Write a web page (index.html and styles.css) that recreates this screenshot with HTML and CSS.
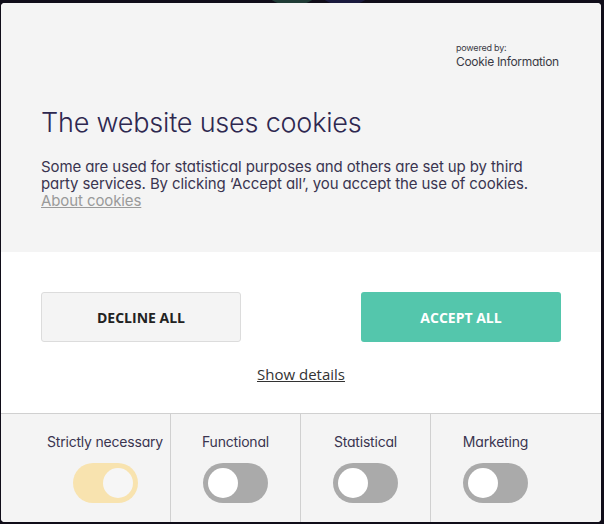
FILE: index.html
```html
<!DOCTYPE html>
<html lang="en">
<head>
    <meta charset="UTF-8">
    <meta name="viewport" content="width=device-width, initial-scale=1.0">
    <title>Cookie consent</title>
    <link rel="stylesheet" href="styles.css">
</head>
<body>
    <div class="backdrop">
        <span class="blob blob-green"></span>
        <span class="blob blob-blue"></span>
    </div>

    <div class="banner">
        <div class="banner-top">
            <div class="powered">
                <span class="powered-small">powered by:</span>
                <span class="powered-name">Cookie Information</span>
            </div>
            <h1 class="title">The website uses cookies</h1>
            <p class="intro">
                Some are used for statistical purposes and others are set up by third
                party services. By clicking ‘Accept all’, you accept the use of cookies.
                <br><a href="#" class="about">About cookies</a>
            </p>
        </div>

        <div class="banner-actions">
            <div class="buttons">
                <button class="btn btn-decline">Decline all</button>
                <button class="btn btn-accept">Accept all</button>
            </div>
            <a href="#" class="details">Show details</a>
        </div>

        <div class="categories">
            <div class="category">
                <span class="category-name">Strictly necessary</span>
                <span class="switch switch-locked"><span class="knob"></span></span>
            </div>
            <div class="category">
                <span class="category-name">Functional</span>
                <span class="switch"><span class="knob"></span></span>
            </div>
            <div class="category">
                <span class="category-name">Statistical</span>
                <span class="switch"><span class="knob"></span></span>
            </div>
            <div class="category">
                <span class="category-name">Marketing</span>
                <span class="switch"><span class="knob"></span></span>
            </div>
        </div>
    </div>
</body>
</html>
```

FILE: styles.css
```css
body {
    margin: 0;
    padding: 3px 0 0 1px;
    background-color: #100d19;
    font-family: Inter, "Liberation Sans", sans-serif;
    font-feature-settings: "cv11";
    position: relative;
    height: 524px;
    box-sizing: border-box;
    overflow: hidden;
}

.backdrop {
    position: absolute;
    top: 0;
    left: 0;
    right: 0;
    height: 10px;
}

.blob {
    position: absolute;
    top: -40px;
    width: 60px;
    height: 46px;
    border-radius: 50%;
}

.blob-green {
    left: 262px;
    background-color: #1f3b35;
}

.blob-blue {
    left: 315px;
    background-color: #1a1a3d;
}

.banner {
    position: relative;
    width: 600px;
    height: 519px;
    background-color: #fff;
    border-radius: 4px;
    overflow: hidden;
    display: flex;
    flex-direction: column;
}

.banner-top {
    background-color: #f4f4f4;
    height: 249px;
    padding: 40px 40px 0;
    box-sizing: border-box;
}

.powered {
    display: flex;
    flex-direction: column;
    width: 105px;
    margin-left: auto;
    color: #3a3a44;
    line-height: 1;
}

.powered-small {
    font-size: 9px;
    letter-spacing: -0.2px;
}

.powered-name {
    font-size: 12px;
    margin-top: 4px;
    letter-spacing: -0.3px;
}

.title {
    margin: 39px 0 0;
    font-size: 27px;
    font-weight: 300;
    color: #2e2850;
    letter-spacing: -0.2px;
    line-height: 1.2;
}

.intro {
    margin: 19px 0 0;
    font-size: 15px;
    line-height: 17px;
    color: #3a3550;
    letter-spacing: -0.1px;
}

.about {
    color: #9a9a9a;
}

.banner-actions {
    height: 162px;
    padding: 40px 40px 0;
    box-sizing: border-box;
    display: flex;
    flex-direction: column;
    align-items: center;
    border-bottom: 1px solid #d0d0d0;
}

.buttons {
    display: flex;
    justify-content: space-between;
    width: 100%;
}

.btn {
    width: 200px;
    height: 50px;
    border-radius: 3px;
    font-family: "Open Sans", sans-serif;
    font-weight: 700;
    font-size: 14px;
    text-transform: uppercase;
    cursor: pointer;
}

.btn-decline {
    background-color: #f4f4f4;
    border: 1px solid #dcdcdc;
    color: #222;
}

.btn-accept {
    background-color: #54c6ac;
    border: none;
    color: #fff;
}

.details {
    margin-top: 22px;
    font-family: "Open Sans", sans-serif;
    font-size: 15px;
    color: #333;
}

.categories {
    flex: 1;
    background-color: #f4f4f4;
    padding: 0 40px 0 39px;
    display: flex;
}

.category {
    width: 130px;
    display: flex;
    flex-direction: column;
    align-items: center;
    padding-top: 19px;
    box-sizing: border-box;
    border-left: 1px solid #d0d0d0;
}

.category:first-child {
    border-left: none;
}

.category-name {
    font-size: 14px;
    color: #3a3550;
    letter-spacing: -0.2px;
    white-space: nowrap;
}

.switch {
    margin-top: 13px;
    width: 65px;
    height: 40px;
    border-radius: 20px;
    background-color: #aaaaaa;
    display: flex;
    align-items: center;
    padding: 0 5px;
    box-sizing: border-box;
}

.knob {
    width: 30px;
    height: 30px;
    border-radius: 50%;
    background-color: #fff;
}

.switch-locked {
    background-color: #f8e3af;
    justify-content: flex-end;
}

.switch-locked .knob {
    background-color: #f6f6f6;
}
```
